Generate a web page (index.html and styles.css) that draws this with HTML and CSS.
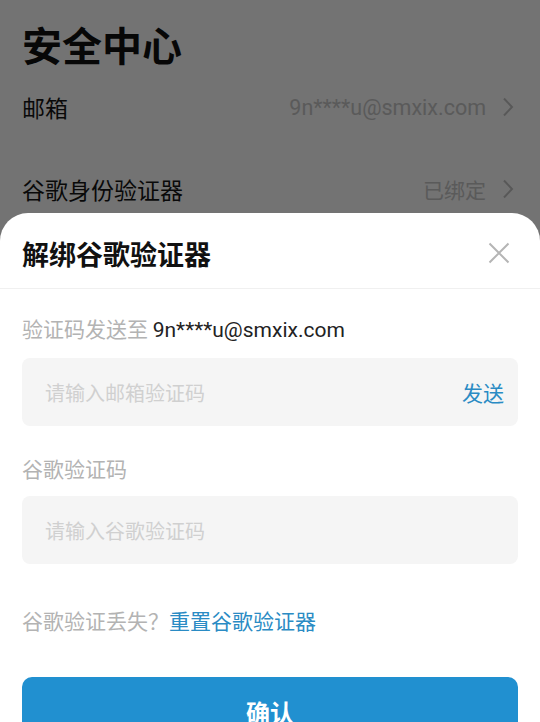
FILE: index.html
```html
<!DOCTYPE html>
<html lang="zh-CN">
<head>
  <meta charset="UTF-8">
  <title>安全中心</title>
  <link rel="stylesheet" href="styles.css">
</head>
<body>

  <div class="page">
    <h1 class="page-title">安全中心</h1>
    <div class="row">
      <span class="row-label">邮箱</span>
      <span class="row-value email">9n****u@smxix.com</span>
      <svg class="chevron" width="12" height="20" viewBox="0 0 12 20"><polyline points="2,1.5 10,10 2,18.5" fill="none" stroke="#c4c4c4" stroke-width="2"/></svg>
    </div>
    <div class="row">
      <span class="row-label">谷歌身份验证器</span>
      <span class="row-value">已绑定</span>
      <svg class="chevron" width="12" height="20" viewBox="0 0 12 20"><polyline points="2,1.5 10,10 2,18.5" fill="none" stroke="#c4c4c4" stroke-width="2"/></svg>
    </div>
  </div>

  <!-- bottom sheet -->
  <div class="mask">
    <div class="sheet">
      <div class="sheet-header">
        <h2>解绑谷歌验证器</h2>
        <svg class="close" width="22" height="22" viewBox="0 0 22 22"><path d="M1.5 1.5 L20.5 20.5 M20.5 1.5 L1.5 20.5" stroke="#b5b5b5" stroke-width="2" fill="none"/></svg>
      </div>

      <form class="sheet-body">
        <div class="field-label">验证码发送至 <span class="email dark">9n****u@smxix.com</span></div>
        <div class="field">
          <input type="text" placeholder="请输入邮箱验证码">
          <span class="send">发送</span>
        </div>

        <div class="field-label">谷歌验证码</div>
        <div class="field">
          <input type="text" placeholder="请输入谷歌验证码">
        </div>

        <div class="lost">谷歌验证丢失？<a href="#">重置谷歌验证器</a></div>

        <button type="submit">确认</button>
      </form>
    </div>
  </div>

</body>
</html>
```

FILE: styles.css
```css
:root{
  --textColor: #141414;
  --mutedColor: #b3b3b3;
  --linkColor: #2a8bc4;
  --boxColor: #f5f5f5;
  --buttonColor: #2190d0;
}

* {
  box-sizing: border-box;
  font-family: "Noto Sans CJK SC", "Noto Sans", sans-serif;
}
body {
  margin: 0;
  background: #fff;
  color: var(--textColor);
}
.email {
  font-family: Roboto, "Noto Sans CJK SC", sans-serif;
}

/*  Page under the sheet  */
.page {
  padding: 22px 22px 0;
}
.page-title {
  margin: 0;
  font-size: 40px;
  line-height: 44px;
  font-weight: 700;
  color: #111;
}
.row {
  display: flex;
  align-items: center;
  height: 82px;
}
.row-label {
  flex: 1;
  font-size: 23px;
}
.row-value {
  font-size: 21px;
  color: #c8c8c8;
  margin-right: 16px;
}
.row-value.email {
  font-size: 21.5px;
}
.chevron {
  margin-right: 4px;
}

/*  Mask + sheet  */
.mask {
  position: fixed;
  inset: 0;
  background: rgba(0,0,0,0.55);
  overflow: hidden;
}
.sheet {
  margin-top: 213px;
  background: #fff;
  border-radius: 28px 28px 0 0;
  min-height: 600px;
}
.sheet-header {
  display: flex;
  align-items: center;
  justify-content: space-between;
  height: 76px;
  padding: 5px 30px 0 22px;
  border-bottom: 1px solid #f0f0f0;
}
.sheet-header h2 {
  margin: 0;
  font-size: 27px;
  font-weight: 700;
  color: #111;
}

.sheet-body {
  padding: 0 22px;
}
.field-label {
  margin-top: 28px;
  margin-bottom: 14px;
  font-size: 21px;
  line-height: 28px;
  color: var(--mutedColor);
}
.field-label:first-child {
  margin-top: 25px;
}
.field-label .dark {
  color: #222;
}
.field {
  display: flex;
  align-items: center;
  height: 68px;
  padding: 0 14px 0 23px;
  background: var(--boxColor);
  border-radius: 8px;
}
.field input {
  flex: 1;
  border: none;
  outline: none;
  background: transparent;
  font-size: 20px;
  color: #222;
  padding: 0;
}
.field input::placeholder {
  color: #d0d0d0;
}
.send {
  font-size: 21px;
  color: var(--linkColor);
}

.lost {
  margin-top: 42px;
  font-size: 21px;
  line-height: 28px;
  color: var(--mutedColor);
}
.lost a {
  color: var(--linkColor);
  text-decoration: none;
}

.sheet-body button {
  display: block;
  width: 100%;
  height: 68px;
  margin-top: 43px;
  border: none;
  border-radius: 10px;
  background: var(--buttonColor);
  color: #fff;
  font-size: 24px;
  font-weight: 700;
  cursor: pointer;
}
```
